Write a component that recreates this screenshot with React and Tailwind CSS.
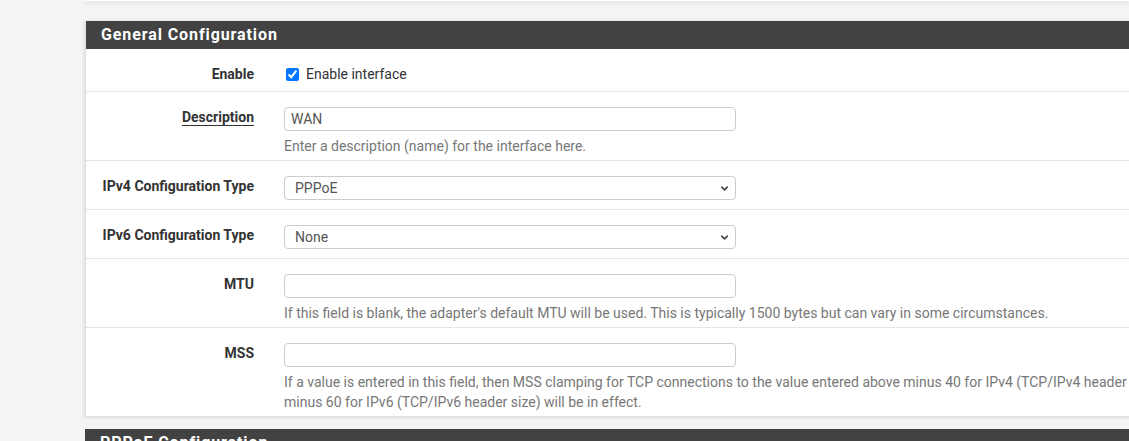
import { ChevronDown } from "lucide-react";

const font = { fontFamily: "Roboto, 'Liberation Sans', sans-serif" };

function Row({ label, underline, children, last }) {
  return (
    <div className={`flex pt-[15px] ${last ? "" : "border-b border-[#e5e5e5]"}`}>
      <div className="w-[183px] shrink-0 pr-[15px] text-right text-[14px] leading-[20px]">
        <span className={`font-bold text-[#333] ${underline ? "underline decoration-[#333] underline-offset-[3px]" : ""}`}>
          {label}
        </span>
      </div>
      <div className="flex-1 pl-[15px]">{children}</div>
    </div>
  );
}

function TextInput({ value }) {
  return (
    <div className="flex h-[24px] w-[452px] items-center rounded-[4px] border border-[#ccc] bg-white px-[6px] text-[14px] text-[#555]">
      {value}
    </div>
  );
}

function SelectBox({ value }) {
  return (
    <div className="flex h-[24px] w-[452px] items-center justify-between rounded-[4px] border border-[#ccc] bg-white pl-[10px] pr-[5px] text-[14px] text-[#555]">
      <span>{value}</span>
      <ChevronDown size={11} strokeWidth={3.5} color="#444" />
    </div>
  );
}

function Help({ children }) {
  return <p className="mt-[5px] whitespace-nowrap text-[14px] leading-[20px] text-[#777]">{children}</p>;
}

export default function App() {
  return (
    <div className="h-[441px] overflow-hidden bg-[#f4f4f4]" style={font}>
      <div className="ml-[85px] h-[1px] bg-white shadow-[0_2px_5px_rgba(0,0,0,0.25)]" />

      <section className="ml-[85px] mt-[20px] w-[1200px] border-l border-[#ddd] bg-white shadow-[0_1px_4px_rgba(0,0,0,0.15)]">
        <div className="flex h-[28px] items-center bg-[#424242] pl-[15px] text-[16px] font-bold tracking-[0.9px] text-white">
          General Configuration
        </div>

        <Row label="Enable">
          <label className="flex h-[20px] items-center gap-[7px] text-[14px] text-[#333]">
            <input type="checkbox" defaultChecked className="m-0 ml-[2px] h-[13px] w-[13px] accent-[#0075ff]" />
            <span>Enable interface</span>
          </label>
          <div className="h-[7px]" />
        </Row>

        <Row label="Description" underline>
          <div className="pb-[4px]">
            <TextInput value="WAN" />
            <Help>Enter a description (name) for the interface here.</Help>
          </div>
        </Row>

        <Row label="IPv4 Configuration Type">
          <div className="pb-[9px]">
            <SelectBox value="PPPoE" />
          </div>
        </Row>

        <Row label="IPv6 Configuration Type">
          <div className="pb-[9px]">
            <SelectBox value="None" />
          </div>
        </Row>

        <Row label="MTU">
          <div className="pb-[4px]">
            <TextInput value="" />
            <Help>
              If this field is blank, the adapter's default MTU will be used. This is typically 1500 bytes but can vary in some circumstances.
            </Help>
          </div>
        </Row>

        <Row label="MSS" last>
          <div className="pb-[4px]">
            <TextInput value="" />
            <Help>
              If a value is entered in this field, then MSS clamping for TCP connections to the value entered above minus 40 for IPv4 (TCP/IPv4 header size) and
              <br />
              minus 60 for IPv6 (TCP/IPv6 header size) will be in effect.
            </Help>
          </div>
        </Row>
      </section>

      <section className="ml-[85px] mt-[13px] w-[1200px] bg-white">
        <div className="flex h-[28px] items-center bg-[#424242] pl-[15px] text-[16px] font-bold tracking-[0.9px] text-white">
          PPPoE Configuration
        </div>
      </section>
    </div>
  );
}
